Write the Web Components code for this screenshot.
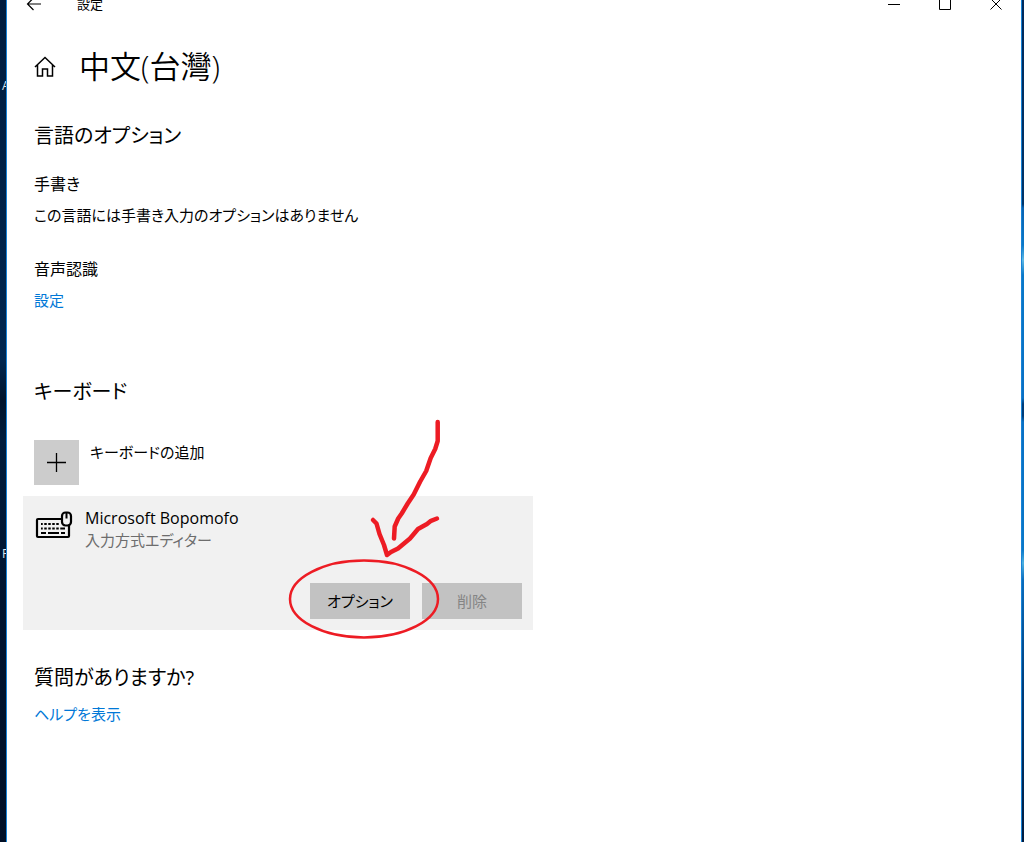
<!DOCTYPE html>
<html lang="ja">
<head>
<meta charset="utf-8">
<meta name="viewport" content="width=device-width, initial-scale=1">
<title>設定</title>
<style>
  body {
    margin: 0;
    color: #000;
    font-family: "Open Sans", "Noto Sans CJK JP", sans-serif;
    font-size: 15px;
    line-height: 24px;
    font-feature-settings: "palt";
  }
</style>
</head>
<body>
<desktop-backdrop>
  <settings-window>
    <title-bar slot="bar">設定</title-bar>
    <page-header>中文(台灣)</page-header>

    <settings-section heading="言語のオプション">
      <option-entry label="手書き">この言語には手書き入力のオプションはありません</option-entry>
      <option-entry label="音声認識"><text-link>設定</text-link></option-entry>
    </settings-section>

    <settings-section heading="キーボード" class="keyboards">
      <add-button>キーボードの追加</add-button>
      <keyboard-card name="Microsoft Bopomofo" kind="入力方式エディター">
        <push-button>オプション</push-button>
        <push-button disabled>削除</push-button>
        <pen-marks slot="overlay"></pen-marks>
      </keyboard-card>
    </settings-section>

    <settings-section heading="質問がありますか?" class="help">
      <text-link>ヘルプを表示</text-link>
    </settings-section>
  </settings-window>
</desktop-backdrop>

<script>
class DesktopBackdrop extends HTMLElement {
  constructor() {
    super();
    this.attachShadow({ mode: 'open' });
  }

  connectedCallback() {
    this.shadowRoot.innerHTML = `
      <style>
        :host {
          display: grid;
          grid-template-columns: 6px minmax(0, 1fr) 2px;
          min-height: 100vh;
          overflow: hidden;
        }
        .left {
          position: relative;
          overflow: hidden;
          background: linear-gradient(#001c3e, #00264f 360px, #00142c 400px, #001c3c 440px, #001430 600px, #000f26);
        }
        .left span {
          position: absolute;
          left: 2px;
          color: #dfe6ee;
          font-size: 12px;
          line-height: 16px;
        }
        .a { top: 78px; }
        .p { top: 546px; }
        .right {
          background: linear-gradient(#002a5c, #003468 204px, #0a62b0 208px, #0a78c8 245px, #5cb8e4 260px,
            #0a78c8 275px, #0a70c4 398px, #003c78 404px, #003c78 416px, #0a70c4 422px, #0a78c8 550px,
            #4cb0e0 563px, #0a6cbc 580px, #003c78 690px, #001c40);
        }
      </style>
      <div class="left"><span class="a">A</span><span class="p">P</span></div>
      <slot></slot>
      <div class="right"></div>
    `;
  }
}

class SettingsWindow extends HTMLElement {
  constructor() {
    super();
    this.attachShadow({ mode: 'open' });
  }

  connectedCallback() {
    this.shadowRoot.innerHTML = `
      <style>
        :host {
          display: block;
          margin-top: -12px;
          background: #fff;
          border: solid #1883d7;
          border-width: 0 1px;
        }
        main {
          padding: 24px 27px 48px;
        }
      </style>
      <slot name="bar"></slot>
      <main><slot></slot></main>
    `;
  }
}

class TitleBar extends HTMLElement {
  constructor() {
    super();
    this.attachShadow({ mode: 'open' });
  }

  connectedCallback() {
    this.shadowRoot.innerHTML = `
      <style>
        :host {
          display: flex;
          height: 32px;
          font-size: 13px;
        }
        button {
          display: grid;
          place-items: center;
          width: 51px;
          padding: 0;
          border: 0;
          background: none;
        }
        button:hover { background: #e6e6e6; }
        .back { width: 54px; }
        .title {
          flex: 1;
          padding-left: 16px;
          line-height: 32px;
        }
        svg {
          fill: none;
          stroke: #000;
        }
      </style>
      <button class="back" aria-label="戻る">
        <svg width="16" height="14" viewBox="0 0 16 14" stroke-width="1.2"><path d="M15 7H1.500M7.500 1 1.500 7l6 6"/></svg>
      </button>
      <span class="title"><slot></slot></span>
      <button aria-label="最小化">
        <svg width="12" height="12" viewBox="0 0 12 12"><path d="M0 6.500h12"/></svg>
      </button>
      <button aria-label="最大化">
        <svg width="12" height="12" viewBox="0 0 12 12"><path d="M.5.5h11v11H.5z"/></svg>
      </button>
      <button aria-label="閉じる">
        <svg width="12" height="12" viewBox="0 0 12 12"><path d="m.5.5 11 11m0-11-11 11"/></svg>
      </button>
    `;
  }
}

class PageHeader extends HTMLElement {
  constructor() {
    super();
    this.attachShadow({ mode: 'open' });
  }

  connectedCallback() {
    this.shadowRoot.innerHTML = `
      <style>
        :host {
          display: flex;
          align-items: center;
          gap: 23px;
        }
        button {
          display: flex;
          padding: 0;
          border: 0;
          background: none;
        }
        h1 {
          margin: 0;
          font-size: 31px;
          font-weight: 350;
          line-height: 44px;
        }
      </style>
      <button aria-label="ホーム">
        <svg width="22" height="22" viewBox="0 0 22 22" fill="none" stroke="#000" stroke-width="1.500">
          <path d="M1 12 11 2.500l10 9.500M3.500 10v11h5v-7h5v7h5V10"/>
        </svg>
      </button>
      <h1><slot></slot></h1>
    `;
  }
}

class SettingsSection extends HTMLElement {
  constructor() {
    super();
    this.attachShadow({ mode: 'open' });
  }

  connectedCallback() {
    this.shadowRoot.innerHTML = `
      <style>
        :host {
          display: block;
          margin-top: 32px;
        }
        :host(.keyboards) { margin-top: 64px; }
        h2 {
          margin: 0 0 20px;
          font-size: 20px;
          font-weight: 400;
          line-height: 32px;
        }
        :host(.keyboards) h2 { margin-bottom: 32px; }
        :host(.help) h2 { margin-bottom: 8px; }
      </style>
      <h2></h2>
      <slot></slot>
    `;
    this.shadowRoot.querySelector('h2').textContent = this.getAttribute('heading');
  }
}

class OptionEntry extends HTMLElement {
  constructor() {
    super();
    this.attachShadow({ mode: 'open' });
  }

  connectedCallback() {
    this.shadowRoot.innerHTML = `
      <style>
        :host { display: block; }
        :host(:not(:first-of-type)) { margin-top: 30px; }
        h3 {
          margin: 0 0 7px;
          font-size: 16px;
          font-weight: 400;
        }
      </style>
      <h3></h3>
      <slot></slot>
    `;
    this.shadowRoot.querySelector('h3').textContent = this.getAttribute('label');
  }
}

class TextLink extends HTMLElement {
  constructor() {
    super();
    this.attachShadow({ mode: 'open' });
  }

  connectedCallback() {
    this.shadowRoot.innerHTML = `
      <style>
        :host { display: block; }
        a {
          color: #0078d7;
          text-decoration: none;
        }
        a:hover { color: #666; }
      </style>
      <a href="#"><slot></slot></a>
    `;
  }
}

class AddButton extends HTMLElement {
  constructor() {
    super();
    this.attachShadow({ mode: 'open' });
  }

  connectedCallback() {
    this.shadowRoot.innerHTML = `
      <style>
        :host { display: block; }
        button {
          display: flex;
          gap: 11px;
          padding: 0;
          border: 0;
          background: none;
          color: inherit;
          font: inherit;
          font-feature-settings: inherit;
        }
        .plus {
          display: grid;
          place-items: center;
          width: 45px;
          height: 45px;
          background: #ccc;
        }
      </style>
      <button>
        <span class="plus">
          <svg width="19" height="19" viewBox="0 0 19 19" stroke="#000" stroke-width="1.300"><path d="M9.500 0v19M0 9.500h19"/></svg>
        </span>
        <slot></slot>
      </button>
    `;
  }
}

class KeyboardCard extends HTMLElement {
  constructor() {
    super();
    this.attachShadow({ mode: 'open' });
  }

  connectedCallback() {
    this.shadowRoot.innerHTML = `
      <style>
        :host {
          position: relative;
          display: block;
          box-sizing: border-box;
          max-width: 510px;
          margin: 11px 0 0 -11px;
          padding: 11px;
          background: #f1f1f1;
        }
        .info {
          display: flex;
          gap: 11px;
          line-height: 22px;
        }
        p { margin: 0; }
        .name { font-size: 16px; }
        .kind { color: #6d6d6d; }
        .actions {
          display: flex;
          justify-content: flex-end;
          gap: 12px;
          margin-top: 32px;
        }
      </style>
      <div class="info">
        <svg width="40" height="34" viewBox="0 0 40 34">
          <rect x="3" y="12" width="32" height="18" rx="1" fill="none" stroke="#000" stroke-width="2.200"/>
          <path d="M7 17h19M7 21.500h24M7 26h5M14 26h11M27 26h4" fill="none" stroke="#000" stroke-width="2"/>
          <path d="M9.500 15v8M13.500 15v8M17.500 15v8M21.500 15v8M25.500 15v8" stroke="#f1f1f1" stroke-width="1.500"/>
          <rect x="28" y="5.500" width="9" height="13" rx="3.500" fill="#f1f1f1" stroke="#000" stroke-width="2.200"/>
          <path d="M32.500 5.500v6" stroke="#000" stroke-width="2"/>
        </svg>
        <div>
          <p class="name"></p>
          <p class="kind"></p>
        </div>
      </div>
      <div class="actions"><slot></slot></div>
      <slot name="overlay"></slot>
    `;
    this.shadowRoot.querySelector('.name').textContent = this.getAttribute('name');
    this.shadowRoot.querySelector('.kind').textContent = this.getAttribute('kind');
  }
}

class PushButton extends HTMLElement {
  constructor() {
    super();
    this.attachShadow({ mode: 'open' });
  }

  connectedCallback() {
    this.shadowRoot.innerHTML = `
      <style>
        :host { display: block; }
        button {
          min-width: 100px;
          height: 36px;
          padding: 0 8px;
          border: 0;
          background: #c2c2c2;
          color: #000;
          font: inherit;
          font-feature-settings: inherit;
        }
        button:disabled { color: #858585; }
      </style>
      <button><slot></slot></button>
    `;
    this.shadowRoot.querySelector('button').disabled = this.hasAttribute('disabled');
  }
}

// red pen drawing over the card: arrow and ring around the first button
class PenMarks extends HTMLElement {
  constructor() {
    super();
    this.attachShadow({ mode: 'open' });
  }

  connectedCallback() {
    this.shadowRoot.innerHTML = `
      <style>
        :host {
          position: absolute;
          top: -80px;
          right: 83px;
          pointer-events: none;
        }
        svg {
          display: block;
          fill: none;
          stroke: #ed1c24;
          stroke-linecap: round;
          stroke-linejoin: round;
        }
      </style>
      <svg width="170" height="230" viewBox="280 416 170 230">
        <g stroke-width="4.500">
          <path d="M437.700 422v19l-2.500 8-4.500 9-4.500 13-6 10.500-6.500 13-6 9-6 10-3.500 5-3.500 8-.7 12"/>
          <path d="m373 520 3.500 3.500 3 10.500 4.500 11 3 10 4-3 7-3.500 12-10 8-9.500 9-5 4-3.200 6-2.300"/>
        </g>
        <ellipse cx="364" cy="599" rx="74" ry="38.500" stroke-width="2.500"/>
      </svg>
    `;
  }
}

customElements.define('desktop-backdrop', DesktopBackdrop);
customElements.define('settings-window', SettingsWindow);
customElements.define('title-bar', TitleBar);
customElements.define('page-header', PageHeader);
customElements.define('settings-section', SettingsSection);
customElements.define('option-entry', OptionEntry);
customElements.define('text-link', TextLink);
customElements.define('add-button', AddButton);
customElements.define('keyboard-card', KeyboardCard);
customElements.define('push-button', PushButton);
customElements.define('pen-marks', PenMarks);
</script>
</body>
</html>
